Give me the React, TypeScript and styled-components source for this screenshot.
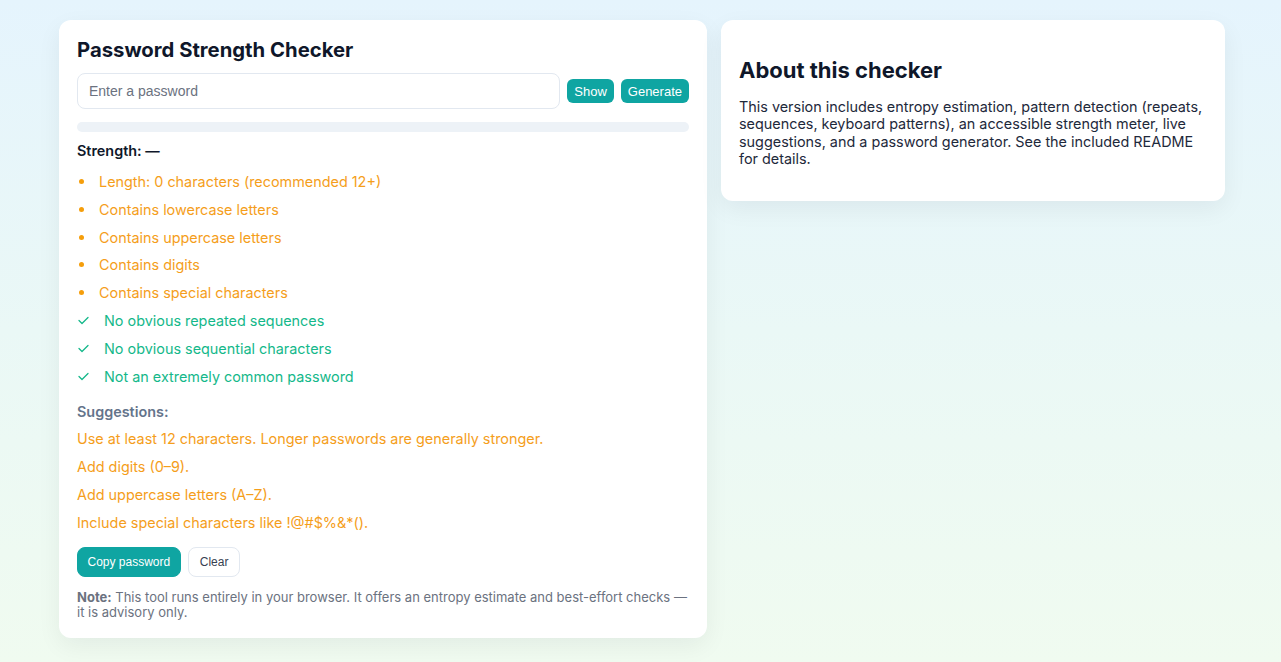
import React from "react";
import styled, { createGlobalStyle } from "styled-components";

const Global = createGlobalStyle`
  html, body { margin: 0; padding: 0; }
  body {
    min-height: 100vh;
    background: linear-gradient(180deg, #e5f4fd 0%, #eaf8f6 50%, #f0fbf0 100%);
    font-family: Inter, "Noto Sans", sans-serif;
    color: #0f172a;
  }
`;

const Page = styled.main`
  width: 1166px;
  margin-left: 59px;
  padding-top: 20px;
  display: grid;
  grid-template-columns: 648px 504px;
  gap: 14px;
  align-items: start;
`;

const Card = styled.section`
  background: #ffffff;
  border-radius: 12px;
  padding: 18px;
  box-shadow: 0 8px 24px rgba(15, 23, 42, 0.06);
`;

const Title = styled.h1`
  margin: 0 0 11px;
  font-size: 20.3px;
  line-height: 24px;
  font-weight: 700;
  color: #0f172a;
`;

const InputRow = styled.div`
  display: flex;
  align-items: center;
  gap: 7px;
`;

const PasswordInput = styled.input`
  flex: 1;
  height: 36px;
  box-sizing: border-box;
  border: 1px solid #e2e8f0;
  border-radius: 8px;
  padding: 0 11px;
  font-family: "Liberation Sans", Arial, sans-serif;
  font-size: 14px;
  color: #0f172a;
  &::placeholder { color: #6b7280; }
  outline: none;
`;

const SmallButton = styled.button`
  height: 24px;
  padding: 0 7px;
  border: none;
  border-radius: 6px;
  background: #0fa5a2;
  color: #ffffff;
  font-family: "Liberation Sans", Arial, sans-serif;
  font-size: 13px;
  cursor: pointer;
`;

const Meter = styled.div`
  margin-top: 13px;
  height: 10px;
  border-radius: 5px;
  background: #edf2f7;
`;

const Label = styled.div<{ $muted?: boolean }>`
  margin-top: ${(p) => (p.$muted ? "13px" : "10px")};
  font-size: 14.4px;
  line-height: 17.4px;
  font-weight: 600;
  color: ${(p) => (p.$muted ? "#64748b" : "#0f172a")};
`;

const CheckList = styled.ul`
  list-style: none;
  margin: 8px 0 0;
  padding: 0;
`;

const CheckItem = styled.li<{ $ok?: boolean }>`
  display: flex;
  align-items: center;
  height: 27.86px;
  font-size: 14.4px;
  color: ${(p) => (p.$ok ? "#14b88a" : "#f59e1b")};
`;

const Marker = styled.span<{ $ok?: boolean }>`
  width: ${(p) => (p.$ok ? "27px" : "22px")};
  flex: none;
  display: flex;
  align-items: center;
  padding-left: ${(p) => (p.$ok ? "1px" : "2px")};
  box-sizing: border-box;
`;

const Dot = styled.span`
  width: 5px;
  height: 5px;
  border-radius: 50%;
  background: #f59e0b;
`;

const Suggestions = styled.div`
  margin-top: 4px;
`;

const Suggestion = styled.div`
  height: 28px;
  display: flex;
  align-items: center;
  font-size: 14.4px;
  color: #f59e1b;
`;

const Actions = styled.div`
  margin-top: 10px;
  display: flex;
  gap: 7px;
`;

const ActionButton = styled.button<{ $primary?: boolean }>`
  height: 30px;
  padding: 0 ${(p) => (p.$primary ? "9.5px" : "11px")};
  border-radius: 8px;
  border: 1px solid ${(p) => (p.$primary ? "#0fa5a2" : "#e2e8f0")};
  background: ${(p) => (p.$primary ? "#0fa5a2" : "#ffffff")};
  color: ${(p) => (p.$primary ? "#ffffff" : "#374151")};
  font-family: "Liberation Sans", Arial, sans-serif;
  font-size: 12px;
  cursor: pointer;
`;

const Note = styled.p`
  margin: 13px 0 0;
  font-size: 13px;
  line-height: 15px;
  color: #6b7280;
`;

const NoteLabel = styled.strong`
  font-weight: 700;
`;

const AboutTitle = styled.h2`
  margin: 19px 0 15px;
  font-size: 22px;
  line-height: 26px;
  font-weight: 700;
  color: #0f172a;
`;

const AboutText = styled.p`
  margin: 0 0 16px;
  font-size: 14.4px;
  line-height: 17.3px;
  color: #1e293b;
`;

const Check = () => (
  <svg width="11" height="9" viewBox="0 0 11 9" fill="none">
    <path d="M1 4.5 L4 7.5 L10 1.5" stroke="#14b88a" strokeWidth="1.3" strokeLinecap="round" strokeLinejoin="round" />
  </svg>
);

const checks: { text: string; ok: boolean }[] = [
  { text: "Length: 0 characters (recommended 12+)", ok: false },
  { text: "Contains lowercase letters", ok: false },
  { text: "Contains uppercase letters", ok: false },
  { text: "Contains digits", ok: false },
  { text: "Contains special characters", ok: false },
  { text: "No obvious repeated sequences", ok: true },
  { text: "No obvious sequential characters", ok: true },
  { text: "Not an extremely common password", ok: true },
];

const suggestions = [
  "Use at least 12 characters. Longer passwords are generally stronger.",
  "Add digits (0–9).",
  "Add uppercase letters (A–Z).",
  "Include special characters like !@#$%&*().",
];

export default function App() {
  return (
    <>
      <Global />
      <Page>
        <Card>
          <Title>Password Strength Checker</Title>
          <InputRow>
            <PasswordInput type="password" placeholder="Enter a password" />
            <SmallButton>Show</SmallButton>
            <SmallButton>Generate</SmallButton>
          </InputRow>
          <Meter />
          <Label>Strength: —</Label>
          <CheckList>
            {checks.map((c) => (
              <CheckItem key={c.text} $ok={c.ok}>
                <Marker $ok={c.ok}>{c.ok ? <Check /> : <Dot />}</Marker>
                {c.text}
              </CheckItem>
            ))}
          </CheckList>
          <Label $muted>Suggestions:</Label>
          <Suggestions>
            {suggestions.map((s) => (
              <Suggestion key={s}>{s}</Suggestion>
            ))}
          </Suggestions>
          <Actions>
            <ActionButton $primary>Copy password</ActionButton>
            <ActionButton>Clear</ActionButton>
          </Actions>
          <Note>
            <NoteLabel>Note:</NoteLabel> This tool runs entirely in your browser. It offers an entropy estimate and best-effort checks — it is advisory only.
          </Note>
        </Card>
        <Card>
          <AboutTitle>About this checker</AboutTitle>
          <AboutText>
            This version includes entropy estimation, pattern detection (repeats, sequences, keyboard patterns), an accessible strength meter, live suggestions, and a password generator. See the included README for details.
          </AboutText>
        </Card>
      </Page>
    </>
  );
}
